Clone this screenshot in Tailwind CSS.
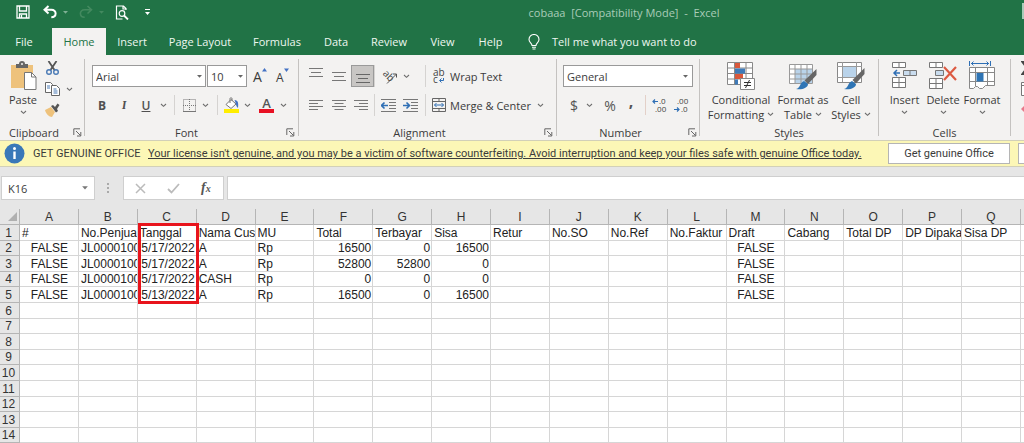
<!DOCTYPE html>
<html lang="en">
<head>
<meta charset="utf-8">
<title>cobaaa [Compatibility Mode] - Excel</title>
<script src="https://cdn.jsdelivr.net/npm/@tailwindcss/browser@4"></script>
</head>
<body class="min-h-screen overflow-hidden bg-white font-['Open_Sans','Noto_Sans',sans-serif] text-[11px] leading-[15px] text-[#3b3b3b]">

<svg class="hidden" aria-hidden="true">
  <symbol id="chev" viewBox="0 0 7 5"><path d="M1 1l2.5 2.3L6 1" fill="none" stroke="#6e6e6e" stroke-width="1.1"/></symbol>
  <symbol id="tri" viewBox="0 0 7 5"><path d="M1 1h5L3.500 3.800z" fill="currentColor"/></symbol>
  <symbol id="launch" viewBox="0 0 9 9"><path d="M.8 7V.8H7M3 3l4.500 4.500M7.800 4v4H4" fill="none" stroke="#666" stroke-width="1"/></symbol>
</svg>

<header class="bg-[#217346] text-[#eef7f1]">
  <div class="flex h-6 items-center">
    <div class="flex w-56 shrink-0 items-center pl-4">
      <button aria-label="Save" class="w-[27px]"><svg class="size-[14px]" viewBox="0 0 14 14" fill="none" stroke="#fff" stroke-width="1.300"><path d="M1 1h12v12H1zM3.500 1v5h7V1M3.500 13V9h7v4M5.500 10v2.500"/></svg></button>
      <button aria-label="Undo" class="w-[19px]"><svg class="h-[14px] w-[14px]" viewBox="0 0 14 14" fill="none" stroke="#fff" stroke-width="2"><path d="M5.500 1L1.500 4.800l4 3.700M1.800 4.800h6.500c6 0 5.500 7.500 0 7.500"/></svg></button>
      <button aria-label="Undo list" class="w-[17px] text-[#7fb094]"><svg class="h-[5px] w-[7px]"><use href="#tri"/></svg></button>
      <button aria-label="Redo" class="w-[19px]"><svg class="h-[14px] w-[14px]" viewBox="0 0 14 14" fill="none" stroke="#43895f" stroke-width="1.600"><path d="M8.500 1l4 3.800-4 3.700M12.200 4.800H5.700c-6 0-5.500 7.500 0 7.500"/></svg></button>
      <button aria-label="Redo list" class="w-[17px] text-[#43895f]"><svg class="h-[5px] w-[7px]"><use href="#tri"/></svg></button>
      <button aria-label="Print preview" class="w-[29px]"><svg class="h-[15px] w-[14px]" viewBox="0 0 14 15" fill="none" stroke="#fff" stroke-width="1.200"><path d="M11 5V3.500L8.500 1H1.500v13h6M8 1v3h3"/><circle cx="7" cy="8.500" r="2.800"/><path d="M9 10.500l4 4" stroke-width="1.800"/></svg></button>
      <button aria-label="Customize Quick Access Toolbar"><svg class="h-[7px] w-[7px]" viewBox="0 0 7 7" fill="#fff"><path d="M1 0h5v1H1zM1 3h5L3.500 6z"/></svg></button>
    </div>
    <h1 class="flex-1 whitespace-pre text-center text-[#a9ccb8]">cobaaa  [Compatibility Mode]  -  Excel</h1>
    <button aria-label="Sign in" class="-ml-[2px] mb-[3px] h-4 w-[2px] bg-[#a9ccb8]"></button>
  </div>
  <nav class="mt-1 flex h-[27px] items-stretch">
    <button class="ml-px mr-[5px] w-[46px]">File</button>
    <button class="w-[54px] bg-[#f3f2f1] font-medium text-[#217346]">Home</button>
    <button class="w-[52px]">Insert</button>
    <button class="w-[84px]">Page Layout</button>
    <button class="w-[70px]">Formulas</button>
    <button class="w-[48px]">Data</button>
    <button class="w-[58px]">Review</button>
    <button class="w-[49px]">View</button>
    <button class="w-[47px]">Help</button>
    <button class="ml-[14px] flex items-center gap-3 whitespace-nowrap"><svg class="h-4 w-3" viewBox="0 0 12 16" fill="none" stroke="#fff" stroke-width="1.100"><path d="M4 11.500c0-2.500-3-3-3-6a5 5 0 0 1 10 0c0 3-3 3.500-3 6zM4 13.300h4M4.500 15h3"/></svg>Tell me what you want to do</button>
  </nav>
</header>

<section aria-label="Ribbon" class="flex h-[85px] overflow-hidden bg-[#f3f2f1]">

  <div class="flex w-[84px] shrink-0 flex-col">
    <div class="flex flex-1 pt-[6px]">
      <button class="ml-[5px] flex w-[36px] flex-col items-center"><svg class="h-[29px] w-[28px]" viewBox="0 0 28 29"><path d="M2 4h22v23H2z" fill="#eec27c"/><path d="M7 7V3h3a3 3 0 0 1 6 0h3v4z" fill="#666"/><circle cx="13" cy="3" r="1" fill="#f3f2f1"/><path d="M15.500 11.500h7l4.500 4.500v12.500H15.500z" fill="#fff" stroke="#777"/><path d="M22.500 11.500V16h4.500" fill="none" stroke="#777"/></svg><span class="pt-[2px]">Paste</span><svg class="mt-[3px] h-[5px] w-[7px]"><use href="#chev"/></svg></button>
      <div class="flex w-[34px] flex-col gap-[7px] pl-[4px]">
        <button aria-label="Cut"><svg class="h-[14px] w-[15px]" viewBox="0 0 15 14" fill="none" stroke-width="1.400"><path d="M3.500 0l6 9M11.500 0l-6 9" stroke="#555" stroke-width="1.800"/><circle cx="4" cy="11" r="2.300" stroke="#4a7ab5"/><circle cx="11" cy="11" r="2.300" stroke="#4a7ab5"/></svg></button>
        <button aria-label="Copy" class="flex items-center gap-[6px]"><svg class="h-[14px] w-[15px]" viewBox="0 0 15 14" fill="#fff" stroke="#666"><path d="M.5.5h5l2 2v8h-7z"/><path d="M6.500 3.500h5l3 3v7h-8z"/><path d="M2 4h3M2 6h3M8.500 7h3M8.500 9h4M8.500 11h4" stroke="#4a7ab5"/></svg><svg class="h-[5px] w-[7px]"><use href="#chev"/></svg></button>
        <button aria-label="Format Painter"><svg class="h-[14px] w-[15px]" viewBox="0 0 15 14"><path d="M0 7l6-3 4 5-3 5c-3 0-6-3-7-7z" fill="#eec27c"/><path d="M6 3l2-1 2 2 2.500-3.500 2 1.500L12 6l1 2-2 1.500z" fill="#555"/></svg></button>
      </div>
    </div>
    <div class="flex h-4 items-center pl-[9px]"><span class="flex-1">Clipboard</span><button aria-label="Clipboard settings" class="mr-[2px]"><svg class="size-[9px]"><use href="#launch"/></svg></button></div>
  </div>

  <div class="my-1 w-px shrink-0 bg-[#c4c2c0]"></div>
  <div class="flex w-[213px] shrink-0 flex-col">
    <div class="flex flex-1 flex-col gap-[7px] pl-[7px] pt-[10px]">
      <div class="flex h-[22px] items-center">
        <div class="grid h-[22px] w-[114px] items-center border border-[#999] bg-white"><select aria-label="Font" class="w-full appearance-none pl-[3px] [grid-area:1/1]"><option>Arial</option></select><svg class="pointer-events-none mr-[2px] h-[5px] w-[7px] justify-self-end text-[#666] [grid-area:1/1]"><use href="#tri"/></svg></div>
        <div class="ml-px grid h-[22px] w-[40px] items-center border border-[#999] bg-white"><select aria-label="Font size" class="w-full appearance-none pl-[3px] [grid-area:1/1]"><option>10</option></select><svg class="pointer-events-none mr-[2px] h-[5px] w-[7px] justify-self-end text-[#666] [grid-area:1/1]"><use href="#tri"/></svg></div>
        <button aria-label="Increase font size" class="ml-[6px] flex w-[23px] items-center text-[14px]">A<svg class="mb-3 h-[4px] w-[5px]" viewBox="0 0 5 4"><path d="M0 3.500h5L2.500 0z" fill="#4472c4"/></svg></button>
        <button aria-label="Decrease font size" class="flex items-center pt-[3px] text-[12px]">A<svg class="mb-4 h-[4px] w-[5px]" viewBox="0 0 5 4"><path d="M0 .5h5L2.500 4z" fill="#4472c4"/></svg></button>
      </div>
      <div class="flex h-[22px] items-center text-[12px] text-[#505050]">
        <button class="ml-[2px] w-[16px] font-bold">B</button>
        <button class="ml-[7px] w-[14px] font-serif font-semibold italic">I</button>
        <button class="ml-[8px] w-[14px] font-semibold underline">U</button>
        <button aria-label="Underline styles" class="ml-[7px]"><svg class="h-[5px] w-[7px]"><use href="#chev"/></svg></button>
        <span class="ml-[7px] h-5 w-px bg-[#d5d3d1]"></span>
        <button aria-label="Borders" class="ml-[8px]"><svg class="size-[13px]" viewBox="0 0 13 13" fill="none" stroke="#777"><path d="M.5.5h12v12H.5zM6.500 0v13M0 6.500h13" stroke-dasharray="1 1"/><path d="M0 12.500h13"/></svg></button>
        <button aria-label="Border styles" class="ml-[6px]"><svg class="h-[5px] w-[7px]"><use href="#chev"/></svg></button>
        <span class="ml-[8px] h-5 w-px bg-[#d5d3d1]"></span>
        <button aria-label="Fill color" class="ml-[6px]"><svg class="h-[16px] w-[16px]" viewBox="0 0 16 16"><path d="M0 12h15v4H0z" fill="#ffee00"/><path d="M7 2.500L12 7l-5 4.500-5-4z" fill="#fff" stroke="#777"/><path d="M6 6V1.500c0-1 2-1 2 0V4" fill="none" stroke="#777"/><path d="M10.500 3c4 0 4 4 3.500 8-1.500-1-2-3-2-4z" fill="#4472c4"/></svg></button>
        <button aria-label="Fill colors" class="ml-[4px]"><svg class="h-[5px] w-[7px]"><use href="#chev"/></svg></button>
        <button aria-label="Font color" class="ml-[8px] flex w-[15px] flex-col items-center"><span class="text-[13px] leading-[11px] font-semibold text-[#555]">A</span><span class="h-1 w-full bg-[#e81123]"></span></button>
        <button aria-label="Font colors" class="ml-[6px]"><svg class="h-[5px] w-[7px]"><use href="#chev"/></svg></button>
      </div>
    </div>
    <div class="flex h-4 items-center pl-[2px]"><span class="flex-1 text-center">Font</span><button aria-label="Font settings" class="mr-[3px]"><svg class="size-[9px]"><use href="#launch"/></svg></button></div>
  </div>

  <div class="my-1 w-px shrink-0 bg-[#c4c2c0]"></div>
  <div class="flex w-[257px] shrink-0 flex-col">
    <div class="flex flex-1 pt-[10px] pl-[7px]">
      <div class="grid w-[68px] grid-cols-3 grid-rows-[22px_22px] content-start gap-y-[7px]">
        <button aria-label="Top align" class="pb-2 pl-[3px]"><svg class="h-[9px] w-[14px]" viewBox="0 0 14 9" stroke="#777"><path d="M0 .5h14M2 4.500h10M0 8.500h14"/></svg></button>
        <button aria-label="Middle align" class="pl-[3px]"><svg class="h-[9px] w-[14px]" viewBox="0 0 14 9" stroke="#777"><path d="M0 .5h14M2 4.500h10M0 8.500h14"/></svg></button>
        <button aria-label="Bottom align" aria-pressed="true" class="flex items-end justify-center border border-[#9a9a9a] bg-[#c8c6c4] pb-[3px]"><svg class="h-[9px] w-[14px]" viewBox="0 0 14 9" stroke="#666"><path d="M0 .5h14M2 4.500h10M0 8.500h14"/></svg></button>
        <button aria-label="Align left" class="pl-[3px]"><svg class="h-[11px] w-[14px]" viewBox="0 0 14 11" stroke="#777"><path d="M0 .5h14M0 3.500h9M0 6.500h14M0 9.500h9"/></svg></button>
        <button aria-label="Center" class="pl-[3px]"><svg class="h-[11px] w-[14px]" viewBox="0 0 14 11" stroke="#777"><path d="M0 .5h14M2.500 3.500h9M0 6.500h14M2.500 9.500h9"/></svg></button>
        <button aria-label="Align right" class="pl-[3px]"><svg class="h-[11px] w-[14px]" viewBox="0 0 14 11" stroke="#777"><path d="M0 .5h14M5 3.500h9M0 6.500h14M5 9.500h9"/></svg></button>
      </div>
      <div class="flex w-[51px] flex-col gap-[7px]">
        <div class="flex h-[22px] items-center border-l border-[#d5d3d1] pl-[7px]"><button aria-label="Orientation" class="flex items-center gap-[6px]"><svg class="size-[15px] overflow-visible" viewBox="0 0 15 15"><text x="1" y="7" font-size="10" fill="#444" transform="rotate(45 3 5)">ab</text><path d="M5 14.500L14.500 5M14.500 8.500V5H11" fill="none" stroke="#555"/></svg><svg class="h-[5px] w-[7px]"><use href="#chev"/></svg></button></div>
        <div class="flex h-[22px] items-center gap-[7px] border-l border-[#d5d3d1] pl-[6px]">
          <button aria-label="Decrease indent"><svg class="h-[13px] w-[15px]" viewBox="0 0 15 13" fill="none" stroke="#777"><path d="M0 .5h15M8 3.500h7M8 6.500h7M8 9.500h7M0 12.500h15"/><path d="M7 6.500H1M3.500 3.500l-3 3 3 3" stroke="#2f6fb5" stroke-width="1.600"/></svg></button>
          <button aria-label="Increase indent"><svg class="h-[13px] w-[15px]" viewBox="0 0 15 13" fill="none" stroke="#777"><path d="M0 .5h15M8 3.500h7M8 6.500h7M8 9.500h7M0 12.500h15"/><path d="M0 6.500h6M3.500 3.500l3 3-3 3" stroke="#2f6fb5" stroke-width="1.600"/></svg></button>
        </div>
      </div>
      <div class="flex flex-1 flex-col gap-[7px]">
        <div class="flex h-[22px] items-center border-l border-[#d5d3d1] pl-[6px]"><button class="flex items-center gap-[4px]"><svg class="h-[15px] w-[14px] overflow-visible" viewBox="0 0 14 15"><text x="1" y="7" font-size="10" fill="#444">ab</text><text x="1" y="14" font-size="10" fill="#444">c</text><path d="M11.500 9v2.500H8M9.500 9.500l-2 2 2 2" fill="none" stroke="#2f6fb5"/></svg>Wrap Text</button></div>
        <div class="flex h-[22px] items-center border-l border-[#d5d3d1] pl-[6px]"><button class="flex items-center gap-[4px]"><svg class="size-[14px]" viewBox="0 0 14 14" fill="none" stroke="#666"><path d="M.5.5h13v13H.5zM.5 3.500h13M.5 10.500h13M7 .5v3M7 10.500v3"/><path d="M2.500 7h9M4.500 5l-2 2 2 2M9.500 5l2 2-2 2" stroke="#2f6fb5"/></svg>Merge &amp; Center</button><button aria-label="Merge options" class="ml-[6px]"><svg class="h-[5px] w-[7px]"><use href="#chev"/></svg></button></div>
      </div>
    </div>
    <div class="flex h-4 items-center"><span class="flex-1 pr-1 text-center">Alignment</span><button aria-label="Alignment settings" class="mr-[3px]"><svg class="size-[9px]"><use href="#launch"/></svg></button></div>
  </div>

  <div class="my-1 w-px shrink-0 bg-[#c4c2c0]"></div>
  <div class="flex w-[142px] shrink-0 flex-col">
    <div class="flex flex-1 flex-col gap-[7px] pl-[6px] pt-[10px]">
      <div class="grid h-[22px] w-[130px] items-center border border-[#999] bg-white"><select aria-label="Number format" class="w-full appearance-none pl-[3px] [grid-area:1/1]"><option>General</option></select><svg class="pointer-events-none mr-[3px] h-[5px] w-[7px] justify-self-end text-[#666] [grid-area:1/1]"><use href="#tri"/></svg></div>
      <div class="flex h-[22px] items-center text-[14px] text-[#555]">
        <button class="w-[22px]">$</button>
        <button aria-label="Currency list" class="ml-px w-[8px]"><svg class="h-[5px] w-[7px]"><use href="#chev"/></svg></button>
        <button class="ml-[8px] w-[16px]">%</button>
        <button class="ml-[9px] w-[8px] pb-2 text-[16px] font-bold">,</button>
        <span class="ml-[10px] h-5 w-px bg-[#e3d0c8]"></span>
        <button aria-label="Increase decimal" class="ml-[6px]"><svg class="h-[15px] w-[15px] overflow-visible" viewBox="0 0 15 15" font-size="8" fill="#444"><text x="7" y="6">.0</text><text x="3" y="14">.00</text><path d="M6 3.500H1M3 1.500l-2 2 2 2" fill="none" stroke="#2f6fb5" stroke-width="1.200"/></svg></button>
        <button aria-label="Decrease decimal" class="ml-[7px]"><svg class="h-[15px] w-[15px] overflow-visible" viewBox="0 0 15 15" font-size="8" fill="#444"><text x="3" y="6">.00</text><text x="7" y="14">.0</text><path d="M0 11.500h5M3 9.500l2 2-2 2" fill="none" stroke="#2f6fb5" stroke-width="1.200"/></svg></button>
      </div>
    </div>
    <div class="flex h-4 items-center"><span class="flex-1 pr-1 text-center">Number</span><button aria-label="Number settings" class="mr-[2px]"><svg class="size-[9px]"><use href="#launch"/></svg></button></div>
  </div>

  <div class="my-1 w-px shrink-0 bg-[#c4c2c0]"></div>
  <div class="flex w-[178px] shrink-0 flex-col">
    <div class="flex flex-1 pl-[4px] pt-[6px]">
      <button class="flex w-[74px] flex-col items-center"><svg class="h-[29px] w-[28px]" viewBox="0 0 28 29"><path d="M.5 1.500h25v22H.5z" fill="#fff" stroke="#888"/><path d="M0 7h26M0 12.500h26M0 18h26M7.500 1v22M19 1v22" stroke="#888" fill="none"/><path d="M8 2h5v5H8zM8 13h8v5H8z" fill="#d9583b"/><path d="M8 7.500h10v5H8zM8 18.500h3v5H8z" fill="#3f7ab8"/><path d="M13.500 17.500h14v11h-14z" fill="#fff" stroke="#888"/><path d="M17 21.500h7M17 24.500h7M22.500 19l-4 8" stroke="#333" fill="none"/></svg><span class="pt-[2px]">Conditional</span><span class="flex items-center gap-[3px]">Formatting<svg class="h-[5px] w-[7px]"><use href="#chev"/></svg></span></button>
      <button class="flex w-[50px] flex-col items-center whitespace-nowrap"><svg class="h-[29px] w-[28px]" viewBox="0 0 28 29"><path d="M.5 3.500h23v19H.5z" fill="#fff"/><path d="M6 8h17v14H6z" fill="#b9d3ea"/><path d="M.5 3.500h23v19H.5zM0 8h24M0 13h24M0 18h24M6 3v19M12 3v19M18 3v19" stroke="#999" fill="none"/><path d="M27.500 8v6L19 23l-3.500-3.500z" fill="#666"/><path d="M7 28c5-1 3-6 8-8l4 3c0 4-6 6-12 5z" fill="#2f75b5"/></svg><span class="pt-[2px]">Format as</span><span class="flex items-center gap-[3px]">Table<svg class="h-[5px] w-[7px]"><use href="#chev"/></svg></span></button>
      <button class="flex w-[46px] flex-col items-center"><svg class="h-[29px] w-[28px]" viewBox="0 0 28 29"><path d="M.5 1.500h24v20H.5z" fill="#fff" stroke="#888"/><path d="M5 6h14v10H5z" fill="#b9d3ea"/><path d="M0 5.500h25M0 16.500h25M5.500 1v20M19.500 1v20" stroke="#999" fill="none"/><path d="M27.500 7v6L19 22.500 15.500 19z" fill="#666"/><path d="M7 28c5-1 3-6 8-8l4 3c0 4-6 6-12 5z" fill="#2f75b5"/></svg><span class="pt-[2px]">Cell</span><span class="flex items-center gap-[3px]">Styles<svg class="h-[5px] w-[7px]"><use href="#chev"/></svg></span></button>
    </div>
    <div class="flex h-4 items-center justify-center">Styles</div>
  </div>

  <div class="my-1 w-px shrink-0 bg-[#c4c2c0]"></div>
  <div class="flex w-[131px] shrink-0 flex-col">
    <div class="flex flex-1 pl-[6px] pt-[6px]">
      <button class="flex w-[39px] flex-col items-center"><svg class="h-[29px] w-[26px]" viewBox="0 0 26 29" fill="#fff" stroke="#777"><path d="M.5 1.500h13v5H.5zM7 1.500v5M.5 16.500h13v10H.5zM7 16.500v10M.5 21.500h13"/><path d="M11.500 9.500h13v5h-13zM18 9.500v5" fill="#c9dcee"/><path d="M8 12H2M5 9l-3 3 3 3" fill="none" stroke="#2f6fb5" stroke-width="1.500"/></svg><span class="pt-[2px]">Insert</span><svg class="mt-[3px] h-[5px] w-[7px]"><use href="#chev"/></svg></button>
      <button class="flex w-[38px] flex-col items-center"><svg class="h-[29px] w-[28px]" viewBox="0 0 28 29" fill="#fff" stroke="#777"><path d="M.5 1.500h13v5H.5zM7 1.500v5M.5 17.500h13v10H.5zM7 17.500v10M.5 22.500h13"/><path d="M6.500 9.500h8v5h-8z" fill="#c9dcee"/><path d="M15 6l12 13M27 6L15 19" fill="none" stroke="#dc5a42" stroke-width="2.200"/></svg><span class="pt-[2px]">Delete</span><svg class="mt-[3px] h-[5px] w-[7px]"><use href="#chev"/></svg></button>
      <button class="flex w-[40px] flex-col items-center"><svg class="h-[29px] w-[28px]" viewBox="0 0 28 29" fill="#fff" stroke="#888"><path d="M1.500 6.500h25v18h-9l-3 3h-3l-2-2h-2l-2 2h-4z"/><path d="M1 11.500h26M1 20.500h26M7.500 6v19M19.500 6v19" fill="none"/><path d="M8.500 12h7v8.500h-7z" fill="#2f75b5" stroke="none"/><path d="M3 2.500h18M5.500.5l-2 2 2 2M18.500.5l2 2-2 2M1.500 0v5M22.500 0v5" fill="none" stroke="#2f6fb5"/></svg><span class="pt-[2px]">Format</span><svg class="mt-[3px] h-[5px] w-[7px]"><use href="#chev"/></svg></button>
    </div>
    <div class="flex h-4 items-center justify-center">Cells</div>
  </div>

  <div class="my-1 w-px shrink-0 bg-[#c4c2c0]"></div>
  <div class="flex min-w-0 flex-1 flex-col gap-[7px] overflow-hidden pl-[10px] pt-[6px]">
    <button aria-label="AutoSum"><svg class="h-[14px] w-[12px]" viewBox="0 0 12 14" fill="none" stroke="#444" stroke-width="2"><path d="M11 1H1.500L6 7l-4.500 6H11"/></svg></button>
    <button aria-label="Fill"><svg class="h-[14px] w-[12px]" viewBox="0 0 12 14" fill="#fff" stroke="#777"><path d="M.5.5h11v13H.5zM.5 3.500h11"/></svg></button>
    <button aria-label="Clear"><svg class="h-[14px] w-[12px]" viewBox="0 0 12 14"><path d="M0 6l5-5 6 5-5 6z" fill="#e8788a"/></svg></button>
  </div>
</section>

<section aria-label="License notice" class="flex h-[27px] items-center overflow-hidden border-t border-b border-[#d2d0b8] bg-[#fcf7b6] font-[Roboto,'Open_Sans',sans-serif] whitespace-nowrap">
  <svg class="ml-[4px] size-[21px] shrink-0" viewBox="0 0 21 21"><circle cx="10.500" cy="10.500" r="10" fill="#3a78b8"/><circle cx="10.500" cy="5.500" r="1.500" fill="#fff"/><path d="M9.300 8.500h2.400V16H9.300z" fill="#fff"/></svg>
  <span class="ml-2 w-[115px] shrink-0">GET GENUINE OFFICE</span>
  <a href="#" class="w-[740px] shrink-0 underline">Your license isn't genuine, and you may be a victim of software counterfeiting. Avoid interruption and keep your files safe with genuine Office today.</a>
  <button class="h-[21px] w-[122px] shrink-0 border border-[#b5b5b5] bg-white">Get genuine Office</button>
  <button aria-label="Learn more" class="ml-2 h-[21px] flex-1 border border-r-0 border-[#b5b5b5] bg-white"></button>
</section>

<section aria-label="Formula bar" class="flex h-[42px] bg-[#e6e6e6] pl-px pt-[9px]">
  <label class="flex h-6 w-[94px] items-center border border-[#cfcfcf] bg-white pr-[5px]"><input aria-label="Name box" value="K16" class="w-full min-w-0 pl-[6px] outline-none"><svg class="h-[6px] w-[8px] shrink-0 text-[#777]" viewBox="0 0 7 5"><use href="#tri"/></svg></label>
  <svg class="ml-[12px] h-6 w-[3px]" viewBox="0 0 3 24" fill="#aaa"><path d="M0 7h2v2H0zM0 11h2v2H0zM0 15h2v2H0z"/></svg>
  <div class="ml-[13px] flex h-6 w-[101px] items-center border border-[#cfcfcf] bg-white">
    <button aria-label="Cancel" class="ml-[11px]"><svg class="size-[11px]" viewBox="0 0 11 11" stroke="#bbb" stroke-width="1.500"><path d="M1 1l9 9M10 1l-9 9"/></svg></button>
    <button aria-label="Enter" class="ml-[21px]"><svg class="h-[11px] w-[13px]" viewBox="0 0 13 11" fill="none" stroke="#bbb" stroke-width="1.800"><path d="M1 6l3.500 3.500L12 1"/></svg></button>
    <button aria-label="Insert function" class="ml-[21px] font-['Liberation_Serif',serif] text-[14px] font-bold text-[#555] italic">f<span class="text-[10px]">x</span></button>
  </div>
  <input aria-label="Formula" class="ml-[3px] h-6 min-w-0 flex-1 border border-r-0 border-[#cfcfcf] bg-white px-2 outline-none">
</section>

<table class="w-full table-fixed border-separate border-spacing-0 font-['Liberation_Sans',Arial,sans-serif] text-[12px] leading-[14px] text-[#222]">
  <colgroup id="cols"></colgroup>
  <thead><tr id="letters" class="h-4 bg-[#e6e6e6]"></tr></thead>
  <tbody id="rows"></tbody>
</table>

<script>
const letters = [...'ABCDEFGHIJKLMNOPQ'];
const data = [
  ['#','No.Penjua','Tanggal','Nama Cus','MU','Total','Terbayar','Sisa','Retur','No.SO','No.Ref','No.Faktur','Draft','Cabang','Total DP','DP Dipaka','Sisa DP'],
  ['FALSE','JL0000100','5/17/2022','A','Rp','16500','0','16500','','','','','FALSE'],
  ['FALSE','JL0000100','5/17/2022','A','Rp','52800','52800','0','','','','','FALSE'],
  ['FALSE','JL0000100','5/17/2022','CASH','Rp','0','0','0','','','','','FALSE'],
  ['FALSE','JL0000100','5/13/2022','A','Rp','16500','0','16500','','','','','FALSE'],
];
document.getElementById('cols').innerHTML =
  '<col class="w-[20px]">' + letters.map(() => '<col>').join('') + '<col class="w-[3px]">';
document.getElementById('letters').innerHTML =
  '<th aria-label="Select all" class="border-r border-b border-[#b5b5b5] p-0"><svg class="ml-2 size-[9px]" viewBox="0 0 9 9"><path d="M9 0v9H0z" fill="#b0b0b0"/></svg></th>' +
  letters.map(l => `<th scope="col" class="border-r border-b border-[#b5b5b5] p-0 font-normal text-[#333]">${l}</th>`).join('') +
  '<th class="border-b border-[#b5b5b5] p-0"></th>';
const marker = '<span class="pointer-events-none absolute -top-[2px] left-0 z-10 h-[81px] w-[61px] border-3 border-[#e8141c]"></span>';
let html = '';
for (let r = 0; r < 14; r++) {
  html += `<tr class="h-4 [&:nth-child(5n+2)]:h-[15px] [&:nth-child(5n+4)]:h-[15px]"><th scope="row" class="border-r border-b border-[#b5b5b5] bg-[#e6e6e6] p-0 pr-[2px] font-normal text-[#333]">${r + 1}</th>`;
  for (let c = 0; c < 17; c++) {
    const v = (data[r] || [])[c] || '';
    let align = 'text-left';
    if (v === 'FALSE') align = 'text-center';
    else if (r > 0 && (c === 2 || (c > 4 && c < 8))) align = 'text-right';
    html += `<td class="relative border-r border-b border-[#d6d6d6] p-0 ${align}"><div class="overflow-hidden whitespace-nowrap pr-px pl-[2px]">${v}</div>${r === 0 && c === 2 ? marker : ''}</td>`;
  }
  html += '<td class="border-b border-[#d6d6d6] p-0"></td></tr>';
}
document.getElementById('rows').innerHTML = html;
</script>
</body>
</html>
